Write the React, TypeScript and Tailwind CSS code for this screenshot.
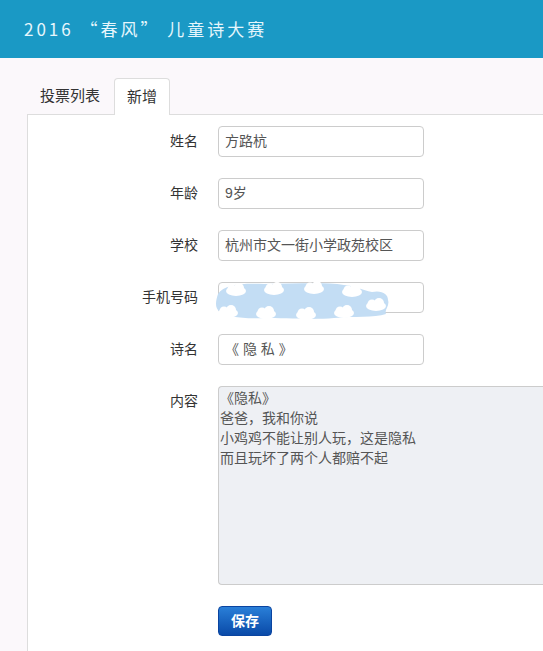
import React from "react";

const font = { fontFamily: '"Liberation Sans", "Noto Sans CJK SC", sans-serif' };

function Clouds() {
  const clouds: [number, number][] = [
    [22, 9], [60, 8], [100, 7], [138, 10],
    [14, 31], [52, 32], [92, 33], [130, 31], [162, 24],
  ];
  return (
    <svg width="180" height="40" viewBox="0 0 180 40" className="block">
      <path
        d="M4 14 C10 4 30 3 50 4 C80 4 110 2 130 5 C142 6 148 10 158 12 C168 10 174 14 174 20 C176 26 170 30 172 34 C160 38 140 36 120 38 C100 40 70 38 50 38 C30 39 12 37 6 32 C0 28 2 20 4 14 Z"
        fill="#c3ddf4"
      />
      {clouds.map(([x, y], i) => (
        <g key={i} fill="#ffffff">
          <ellipse cx={x} cy={y + 2} rx="10" ry="5" />
          <circle cx={x - 4} cy={y} r="4.5" />
          <circle cx={x + 3} cy={y - 1} r="5" />
        </g>
      ))}
    </svg>
  );
}

function Row({ label, children }: { label: string; children: React.ReactNode }) {
  return (
    <div className="flex items-start">
      <div className="w-[170px] shrink-0 text-right text-[14px] leading-[31px] text-[#333]">{label}</div>
      <div className="ml-[20px] relative">{children}</div>
    </div>
  );
}

function Input({ value }: { value: string }) {
  return (
    <div className="w-[206px] h-[31px] rounded-[4px] border border-[#cccccc] bg-white px-[6px] text-[14px] leading-[29px] text-[#555]">
      {value}
    </div>
  );
}

export default function App() {
  return (
    <div className="w-[543px] h-[651px] overflow-hidden bg-[#fbf8fb]" style={font}>
      <div className="h-[58px] bg-[#1a99c5] flex items-center pl-[24px]">
        <span
          className="text-[17px] tracking-[3px] text-[#e6f6fc]"
          style={{ fontFamily: '"Noto Sans CJK SC", sans-serif' }}
        >
          2016 “春风” 儿童诗大赛
        </span>
      </div>
      <div className="pl-[27px] pt-[20px]">
        <div className="flex items-end h-[36px] pl-[1px]">
          <div className="h-[36px] px-[12px] mr-[2px] text-[15px] leading-[36px] text-[#333]">投票列表</div>
          <div className="h-[37px] -mb-[1px] px-[12px] text-[15px] leading-[36px] text-[#333] bg-white border border-b-0 border-[#dddddd] rounded-t-[4px] relative z-10">
            新增
          </div>
        </div>
        <div className="bg-white border-l border-t border-[#dddddd] h-[560px] pt-[11px] flex flex-col gap-[21px]">
          <Row label="姓名"><Input value="方路杭" /></Row>
          <Row label="年龄"><Input value="9岁" /></Row>
          <Row label="学校"><Input value="杭州市文一街小学政苑校区" /></Row>
          <Row label="手机号码">
            <Input value="" />
            <div className="absolute left-[-4px] top-[-2px]">
              <Clouds />
            </div>
          </Row>
          <Row label="诗名"><Input value="《 隐 私 》" /></Row>
          <div className="flex items-start">
            <div className="w-[170px] shrink-0 text-right text-[14px] leading-[31px] text-[#333]">内容</div>
            <div className="ml-[20px] w-[340px] h-[199px] rounded-l-[4px] border border-r-0 border-[#cccccc] bg-[#eef0f4] pl-[1px] pt-[1px] text-[14px] leading-[20px] text-[#555]">
              <div>《隐私》</div>
              <div>爸爸，我和你说</div>
              <div>小鸡鸡不能让别人玩，这是隐私</div>
              <div>而且玩坏了两个人都赔不起</div>
            </div>
          </div>
          <div className="pl-[190px]">
            <button className="w-[54px] h-[30px] rounded-[4px] bg-gradient-to-b from-[#2a7fd8] to-[#0a4aa8] text-white text-[14px] font-bold border border-[#0a44a0]">
              保存
            </button>
          </div>
        </div>
      </div>
    </div>
  );
}
